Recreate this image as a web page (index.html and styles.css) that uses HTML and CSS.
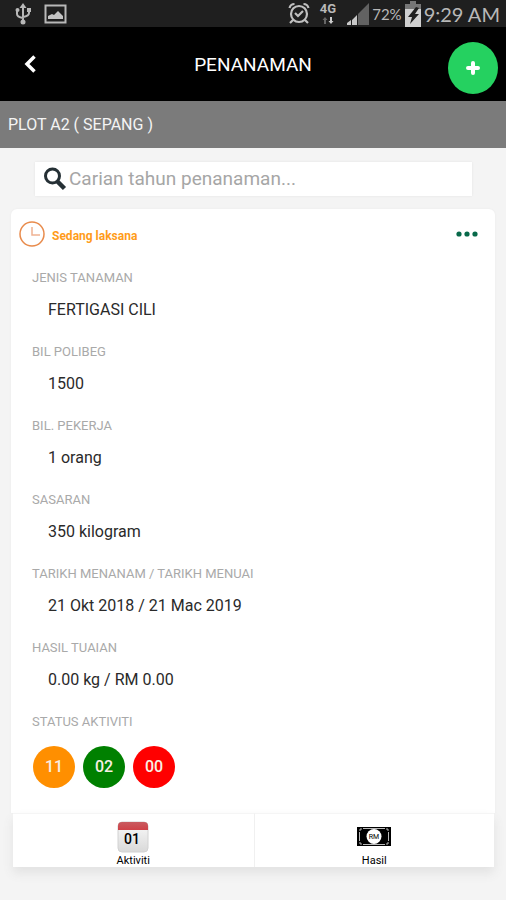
FILE: index.html
```html
<!DOCTYPE html>
<html lang="ms">
<head>
<meta charset="utf-8">
<meta name="viewport" content="width=device-width, initial-scale=1">
<title>Penanaman</title>
<link rel="stylesheet" href="styles.css">
</head>
<body>
<div class="status-bar">
  <div class="status-group status-left">
    <svg width="16" height="22" viewBox="0 0 16 22" fill="none" stroke="#b8b8b8" stroke-width="2"><path d="M8 3v15M2 8v3q0 3 6 4M14 7v3q0 3-6 4"/><g fill="#b8b8b8" stroke="none"><path d="M8 0l3.500 5h-7z"/><circle cx="8" cy="19" r="2.500"/><circle cx="2.500" cy="7" r="2"/><path d="M12 5h4v4h-4z"/></g></svg>
    <svg width="23" height="20" viewBox="0 0 23 20"><path d="M1.500 1.500h20v17h-20z" fill="none" stroke="#b8b8b8" stroke-width="2"/><path d="M4 15v-3l4-2 2 1 4-4 5 5v3z" fill="#c4c4c4"/></svg>
  </div>
  <div class="status-group">
    <svg width="22" height="23" viewBox="0 0 22 23" fill="none" stroke="#c0c0c0" stroke-width="2.200"><circle cx="11" cy="12" r="8"/><path d="M7 11l3 3 5-5M1.500 6q1-4 5-4M20.500 6q-1-4-5-4M5 18l-3 3M17 18l3 3"/></svg>
    <span class="network"><span>4G</span><svg width="12" height="7" viewBox="0 0 12 7"><path d="M3 0l2.500 3H4v4H2V3H.500z" fill="#666"/><path d="M8 0h2v4h1.500L9 7 6.500 4H8z" fill="#ccc"/></svg></span>
    <svg class="signal" width="24" height="22" viewBox="0 0 24 22"><path d="M1 22v-2l4-3v5zM6 22v-5l5-5v10z" fill="#c8c8c8"/><path d="M12 22V11l11-11v22z" fill="#626262"/><path d="M5.500 16v6M11.500 11v11" stroke="#1f1f1f"/></svg>
    <span class="battery-text">72%</span>
    <svg width="18" height="26" viewBox="0 0 18 26"><path d="M6 0h6v3H6z" fill="#777"/><path d="M1 3h16v5H1z" fill="#777"/><path d="M1 8h16v18H1z" fill="#d0d0d0"/><path d="M12 6l-8 10h4l-2 7 9-10h-4l4-6z" fill="#1f1f1f"/></svg>
    <span class="clock">9:29 AM</span>
  </div>
</div>
<header class="header">
  <button class="back" type="button" aria-label="Kembali"><svg width="13" height="18" viewBox="0 0 13 18"><path d="M10.500 1.500L3 9l7.500 7.500" fill="none" stroke="#fff" stroke-width="3.500"/></svg></button>
  <h1 class="title">PENANAMAN</h1>
  <button class="add" type="button" aria-label="Tambah"><svg width="14" height="14" viewBox="0 0 14 14"><path d="M7 2v10M2 7h10" stroke="#fff" stroke-width="4" stroke-linecap="round"/></svg></button>
</header>
<div class="plot">PLOT A2 ( SEPANG )</div>
<main class="main">
  <label class="search">
    <svg width="24" height="24" viewBox="0 0 24 24" fill="none" stroke="#253035"><circle cx="9.500" cy="9" r="7" stroke-width="3"/><path d="M14.500 14.500l7 7" stroke-width="4.500"/></svg>
    <input class="search-input" type="text" aria-label="Carian" placeholder="Carian tahun penanaman...">
  </label>
  <article class="card">
    <div class="card-head">
      <svg width="26" height="26" viewBox="0 0 26 26" fill="none"><circle cx="13" cy="13" r="12" stroke="#e88b4c" stroke-width="1.500"/><path d="M13 6v8h8" stroke="#efb293" stroke-width="1.500"/></svg>
      <span class="state">Sedang laksana</span>
      <button class="more" type="button" aria-label="Menu"><svg width="22" height="6" viewBox="0 0 22 6" fill="#08694a"><circle cx="3" cy="3" r="2.600"/><circle cx="11" cy="3" r="2.600"/><circle cx="19" cy="3" r="2.600"/></svg></button>
    </div>
    <dl class="details">
      <div><dt>JENIS TANAMAN</dt><dd>FERTIGASI CILI</dd></div>
      <div><dt>BIL POLIBEG</dt><dd>1500</dd></div>
      <div><dt>BIL. PEKERJA</dt><dd>1 orang</dd></div>
      <div><dt>SASARAN</dt><dd>350 kilogram</dd></div>
      <div><dt>TARIKH MENANAM / TARIKH MENUAI</dt><dd>21 Okt 2018 / 21 Mac 2019</dd></div>
      <div><dt>HASIL TUAIAN</dt><dd>0.00 kg / RM 0.00</dd></div>
      <div><dt>STATUS AKTIVITI</dt><dd class="badges"><span class="badge orange">11</span><span class="badge green">02</span><span class="badge red">00</span></dd></div>
    </dl>
  </article>
  <nav class="actions">
    <button class="action" type="button">
      <svg width="32" height="32" viewBox="0 0 32 32"><defs><linearGradient id="paper" x2="0" y2="1"><stop stop-color="#fafafa"/><stop offset="1" stop-color="#d9d9d9"/></linearGradient><linearGradient id="top" x2="0" y2="1"><stop stop-color="#c85b60"/><stop offset="1" stop-color="#cf4248"/></linearGradient></defs><rect x="1" y="1" width="30" height="30" rx="4" fill="url(#paper)" stroke="#d2d2d2"/><path d="M1 9V5q0-4 4-4h22q4 0 4 4v4z" fill="url(#top)"/><text class="calendar-day" x="15" y="23" text-anchor="middle">01</text></svg>
      <span>Aktiviti</span>
    </button>
    <button class="action" type="button">
      <svg width="34" height="32" viewBox="0 0 34 32"><path d="M0 6h34v19H0z"/><path d="M3 10V8h2M29 8h2v2M3 21v2h2M29 23h2v-2M6 7.500h22M6 23.500h22M2.500 11v9M31.500 11v9" fill="none" stroke="#bbb"/><circle cx="17" cy="15.500" r="7.500" fill="#fff"/><text class="note-mark" x="17" y="18" text-anchor="middle">RM</text></svg>
      <span>Hasil</span>
    </button>
  </nav>
</main>
</body>
</html>
```
FILE: styles.css
```css
* { box-sizing: border-box; }
body {
  margin: 0;
  min-height: 100vh;
  background: #f4f4f4;
  color: #2a2a2a;
  font-family: Roboto, "Liberation Sans", sans-serif;
}
button { padding: 0; border: 0; background: none; font: inherit; color: inherit; }
svg { display: block; flex: none; }
.status-bar {
  display: flex;
  justify-content: space-between;
  height: 27px;
  padding: 0 6px 0 15px;
  background: #1f1f1f;
  color: #b8b8b8;
  font-family: Lato, sans-serif;
}
.status-group { display: flex; align-items: center; gap: 2px; }
.status-left { gap: 13px; }
.network {
  display: flex;
  flex-direction: column;
  align-items: center;
  gap: 2px;
  margin: 0 8px;
  font: bold 13px/12px Roboto, sans-serif;
}
.battery-text { font-size: 15px; }
.clock { font-size: 20px; }
.header {
  display: grid;
  grid-template-columns: 50px 1fr 50px;
  align-items: center;
  height: 74px;
  padding: 0 8px;
  background: #000;
  color: #fff;
}
.back { display: flex; align-items: center; height: 44px; padding-left: 16px; }
.title { margin: 0; font-size: 19px; font-weight: 400; text-align: center; }
.add {
  display: flex;
  align-items: center;
  justify-content: center;
  height: 52px;
  margin-top: 8px;
  border-radius: 50%;
  background: #25d160;
}
.plot {
  padding: 0 8px;
  background: #7b7b7b;
  color: #f4f4f4;
  font-size: 16px;
  line-height: 47px;
}
.main { padding: 14px 11px 32px; }
.search {
  display: flex;
  align-items: center;
  gap: 2px;
  height: 34px;
  margin: 0 23px 13px 24px;
  padding: 0 8px;
  background: #fff;
  box-shadow: 0 0 2px #e4e4e4;
}
.search-input {
  flex: 1;
  min-width: 0;
  padding: 0;
  border: 0;
  outline: 0;
  background: none;
  font: 19px/24px Roboto, sans-serif;
}
.search-input::placeholder { color: #a6a6a6; opacity: 1; }
.card {
  padding: 12px 17px 25px 8px;
  border-radius: 6px 6px 0 0;
  background: #fff;
  box-shadow: 0 0 2px #e8e8e8;
}
.card-head { display: flex; align-items: center; gap: 7px; }
.state { padding-top: 3px; color: #ff9c1a; font-size: 12px; font-weight: 700; line-height: 16px; }
.more { display: flex; align-items: center; height: 24px; margin-left: auto; }
.details { display: grid; gap: 22px; margin: 21px 0 0 13px; }
.details dt { color: #a9a9a9; font-size: 13px; line-height: 20px; }
.details dd { margin: 12px 0 0 16px; font-size: 16px; line-height: 20px; }
.details .badges { display: flex; gap: 8px; margin: 14px 0 0 1px; }
.badge {
  width: 42px;
  height: 42px;
  border-radius: 50%;
  color: #f8efe4;
  font-weight: 500;
  line-height: 42px;
  text-align: center;
}
.orange { background: #ff8f00; }
.green { background: #008000; }
.red { background: #f00; }
.actions {
  display: grid;
  grid-template-columns: 1fr 1fr;
  margin: 0 1px 0 2px;
  background: #fff;
  box-shadow: 0 6px 10px #e2e2e2;
}
.action {
  display: flex;
  flex-direction: column;
  align-items: center;
  gap: 2px;
  padding: 7px 0 0;
  border-top: 1px solid #f5f5f5;
  color: #000;
  font-size: 11px;
  font-weight: 400;
  line-height: 12px;
}
.action + .action { border-left: 1px solid #f0f0f0; }
.calendar-day { font: 500 14px Roboto, sans-serif; }
.note-mark { font: 7px Roboto, sans-serif; }
```
